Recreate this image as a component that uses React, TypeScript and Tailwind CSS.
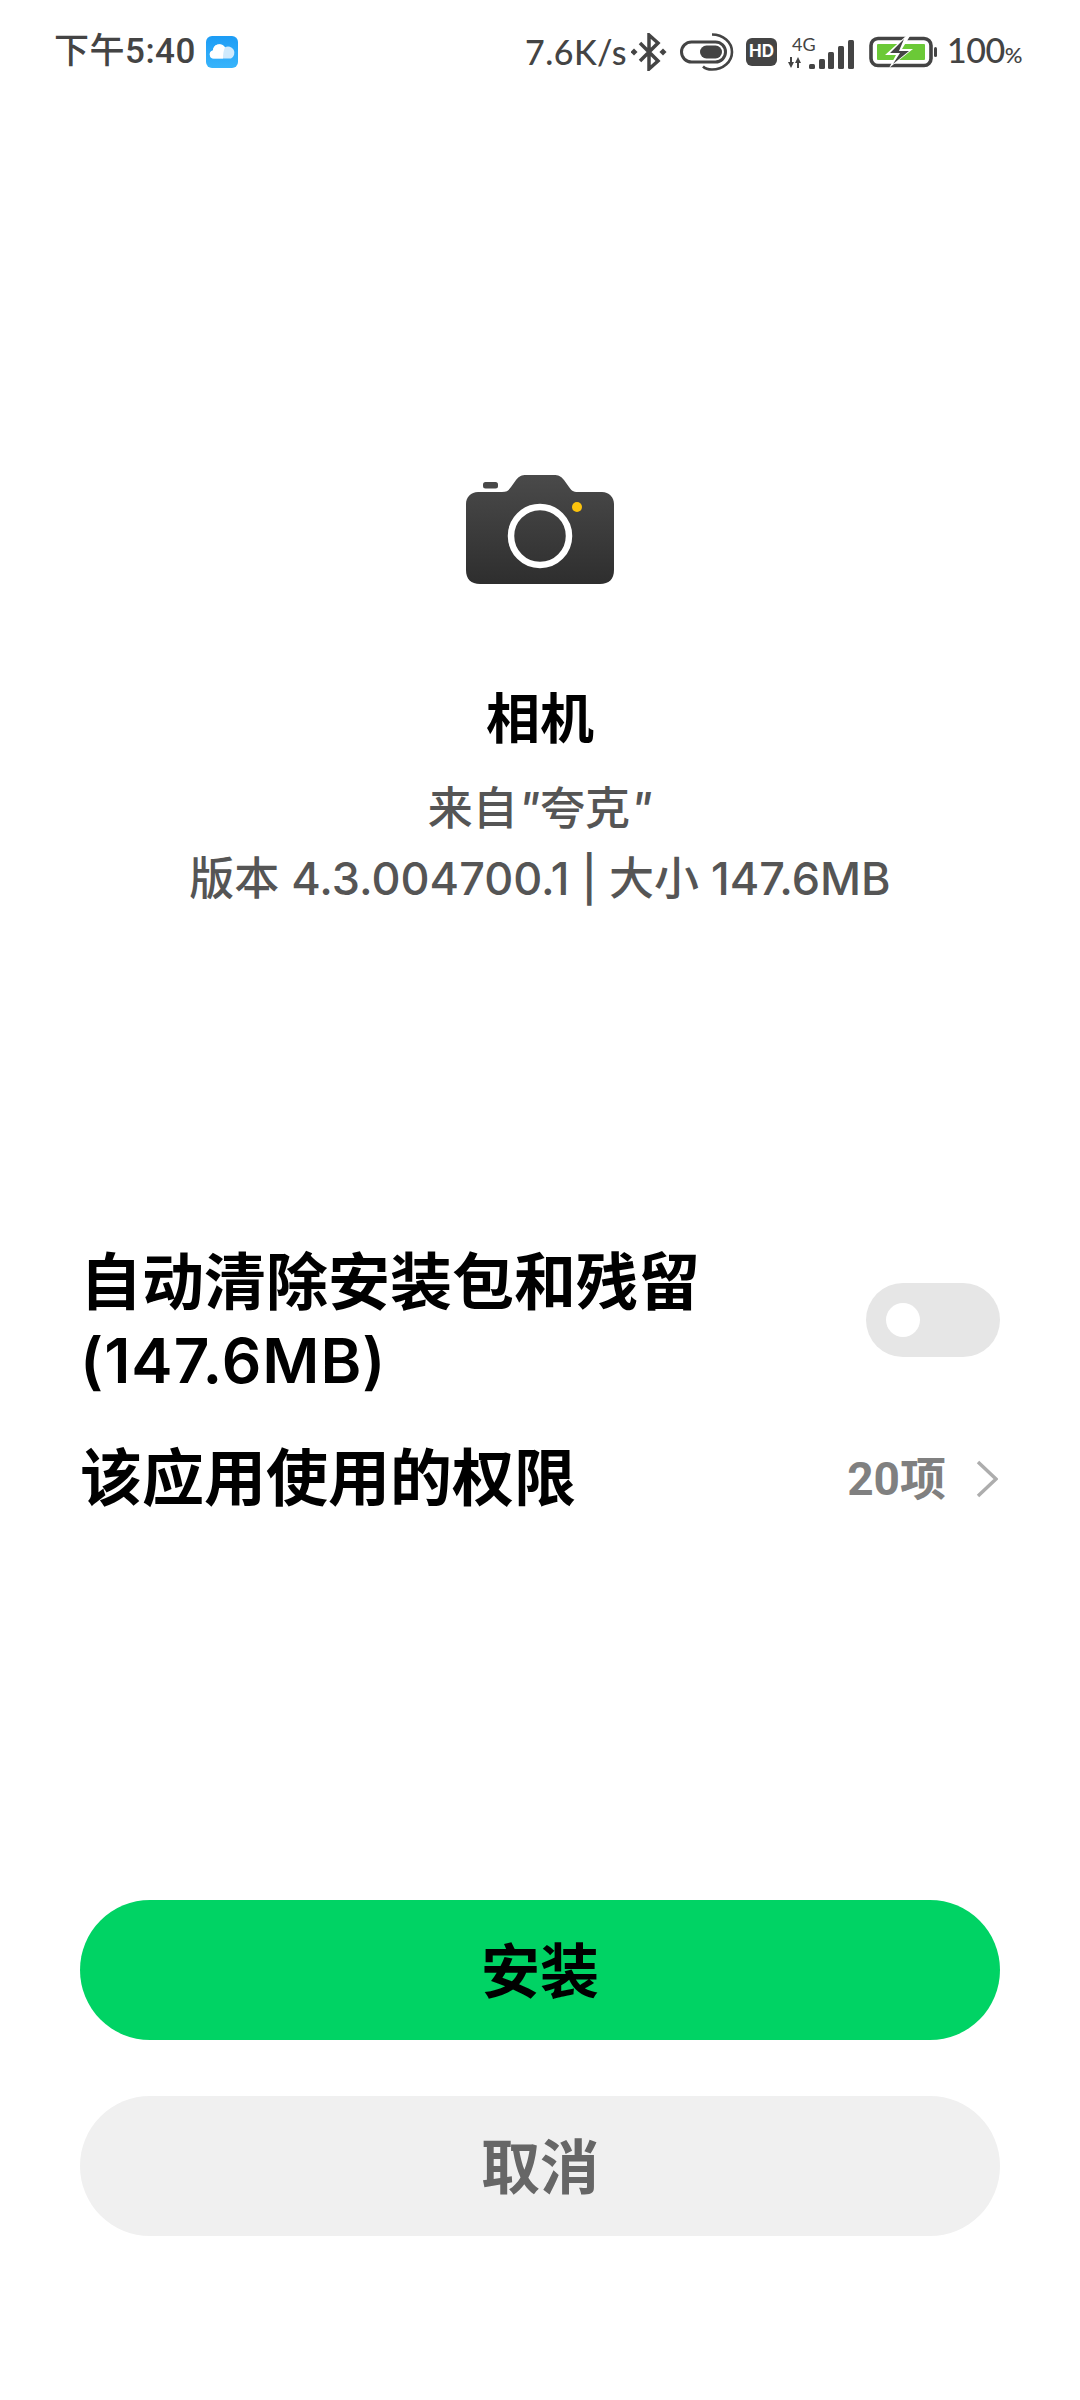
const cjk = "font-['Inter','Noto_Sans_CJK_SC',sans-serif]";

const CloudBadge = () => (
  <svg width="32" height="32" viewBox="0 0 32 32">
    <defs>
      <linearGradient id="cloudBg" x1="0" y1="0" x2="0" y2="1">
        <stop offset="0" stopColor="#1c9cf5" />
        <stop offset="1" stopColor="#38b4fb" />
      </linearGradient>
    </defs>
    <rect width="32" height="32" rx="6" fill="url(#cloudBg)" />
    <path d="M16 22.5H7.500a4 4 0 0 1-.6-7.900A6.600 6.600 0 0 1 19 11.200a5.600 5.600 0 0 1 6 11.300z" fill="#cfeafd" />
    <path d="M17 22.500H7.500a4 4 0 0 1-.6-7.900A6.600 6.600 0 0 1 19 11.200c-1.500 3-2 7-2 11.300z" fill="#fff" />
  </svg>
);

const Bluetooth = () => (
  <svg width="36" height="38" viewBox="0 0 36 38" fill="none" stroke="#444" strokeWidth="3.500">
    <path d="M9 10l18 18-9 8V2l9 8L9 28" />
    <rect x="0.500" y="16.500" width="5" height="5" fill="#444" stroke="none" transform="rotate(45 3 19)" />
    <rect x="29.500" y="16.500" width="5" height="5" fill="#444" stroke="none" transform="rotate(45 32 19)" />
  </svg>
);

const LinkToggle = () => (
  <svg width="54" height="38" viewBox="0 0 54 38" fill="none">
    <rect x="1.500" y="9" width="44" height="20" rx="10" stroke="#444" strokeWidth="3" />
    <rect x="20" y="12.500" width="22" height="13" rx="6.500" fill="#444" />
    <path d="M32 1.500c11 0 20 7.500 20 17.500s-9 17.500-20 17.500c-4 0-7-1-9-3" stroke="#444" strokeWidth="2.600" />
  </svg>
);

const Signal = () => (
  <div className="relative w-[68px] h-[40px] shrink-0">
    <span className="absolute left-[4px] top-[2px] text-[18px] leading-[20px] font-['Lato',sans-serif] text-[#444]">4G</span>
    <svg className="absolute left-0 top-0" width="68" height="40" viewBox="0 0 68 40" fill="#444">
      <path d="M0 30h2v-5h2v5h2l-3 6zM7 31l3-6 3 6h-2v5H9v-5z" />
      <rect x="21" y="32" width="6" height="5" rx="1.500" />
      <rect x="31" y="27" width="6" height="10" rx="1.500" />
      <rect x="40" y="20" width="6" height="17" rx="1.500" />
      <rect x="50" y="14" width="6" height="23" rx="1.500" />
      <rect x="60" y="8" width="6" height="29" rx="1.500" />
    </svg>
  </div>
);

const Battery = () => (
  <svg width="68" height="32" viewBox="0 0 68 32" fill="none">
    <rect x="2" y="2.500" width="60" height="27" rx="7" stroke="#444" strokeWidth="3.600" />
    <rect x="8" y="8" width="48" height="16" rx="1" fill="#6bc937" />
    <rect x="65" y="11" width="3" height="10" rx="1.500" fill="#444" />
    <path d="M37 0L16 19h11l-7 13 24-19H33l8-13z" fill="#fff" />
    <path d="M35 3L21 17h10l-7 11 16-13H30l5-12z" fill="#444" />
  </svg>
);

const Camera = () => (
  <svg width="148" height="110" viewBox="0 0 148 110">
    <defs>
      <linearGradient id="camBody" x1="0" y1="0" x2="0" y2="1">
        <stop offset="0" stopColor="#4a4a4a" />
        <stop offset="1" stopColor="#2e2e2e" />
      </linearGradient>
    </defs>
    <rect x="17" y="8" width="15" height="6.500" rx="2.500" fill="#484848" />
    <path
      d="M12 18H36C41 18 43 16 45 13L50 6C53 2 56 1 60 1H88C92 1 95 2 98 6L103 13C105 16 107 18 112 18H136C143 18 148 23 148 30V96C148 105 143 110 134 110H14C5 110 0 105 0 96V30C0 23 5 18 12 18Z"
      fill="url(#camBody)"
    />
    <circle cx="74" cy="62" r="29" fill="none" stroke="#fff" strokeWidth="6.500" />
    <circle cx="111" cy="33" r="5" fill="#fcc30d" />
  </svg>
);

const StatusBar = () => (
  <div className="flex items-center justify-between h-[104px] pl-[54px] pr-[58px] text-[#444]">
    <div className="flex items-center gap-[10px]">
      <span className="text-[35px] leading-[40px] font-medium font-['Roboto','Noto_Sans_CJK_SC',sans-serif] tracking-[0.5px]">下午5:40</span>
      <CloudBadge />
    </div>
    <div className="flex items-center">
      <span className="text-[34px] leading-[40px] font-['Lato',sans-serif] font-medium tracking-[0.5px]">7.6K/s</span>
      <div className="ml-[4px]"><Bluetooth /></div>
      <div className="ml-[13px]"><LinkToggle /></div>
      <span className="ml-[12px] w-[31px] h-[28px] rounded-[6px] bg-[#444] text-white text-[17px] font-bold flex items-center justify-center">HD</span>
      <div className="ml-[11px]"><Signal /></div>
      <div className="ml-[13px]"><Battery /></div>
      <span className="ml-[10px] text-[34px] leading-[40px] font-medium font-['Lato',sans-serif] tracking-[-0.5px]">100<span className="text-[22px]">%</span></span>
    </div>
  </div>
);

export default function App() {
  return (
    <div className={`w-[1080px] h-[2400px] bg-white flex flex-col ${cjk}`}>
      <StatusBar />

      <div className="flex flex-col items-center pt-[370px]">
        <Camera />
        <h1 className="mt-[99px] text-[54px] leading-[74px] font-bold text-black">相机</h1>
        <p className="mt-[24px] text-[45px] leading-[56px] font-medium text-[#555]">
          来自<span className="italic">"</span>夸克<span className="italic">"</span>
        </p>
        <p className="mt-[14px] text-[45px] leading-[56px] font-medium text-[#555]">版本 4.3.004700.1 | 大小 147.6MB</p>
      </div>

      <div className="px-[80px] pt-[337px] flex flex-col">
        <div className="flex items-center justify-between">
          <p className="w-[640px] text-[62px] leading-[78px] font-semibold text-black">
            自动清除安装包和残留 <span className="tracking-[1px]">(147.6MB)</span>
          </p>
          <div className="mb-[4px] w-[134px] h-[74px] rounded-full bg-[#e6e6e6] flex items-center pl-[20px]">
            <span className="w-[34px] h-[34px] rounded-full bg-white" />
          </div>
        </div>
        <div className="mt-[39px] flex items-center justify-between">
          <p className="text-[62px] leading-[80px] font-semibold text-black">该应用使用的权限</p>
          <div className="flex items-center">
            <span className="text-[46px] leading-[60px] font-bold text-[#808080] font-['Roboto','Noto_Sans_CJK_SC',sans-serif]">20项</span>
            <svg className="ml-[30px] mr-[2px]" width="22" height="38" viewBox="0 0 22 38" fill="none" stroke="#adadad" strokeWidth="3.500">
              <path d="M2 2l18 17L2 36" />
            </svg>
          </div>
        </div>
      </div>

      <div className="mt-auto pb-[164px] px-[80px] flex flex-col gap-[56px]">
        <button className="h-[140px] pt-[4px] rounded-full bg-[#00d364] text-[59px] font-bold text-black">安装</button>
        <button className="h-[140px] pt-[4px] rounded-full bg-[#f0f0f0] text-[59px] font-bold text-[#666]">取消</button>
      </div>
    </div>
  );
}
